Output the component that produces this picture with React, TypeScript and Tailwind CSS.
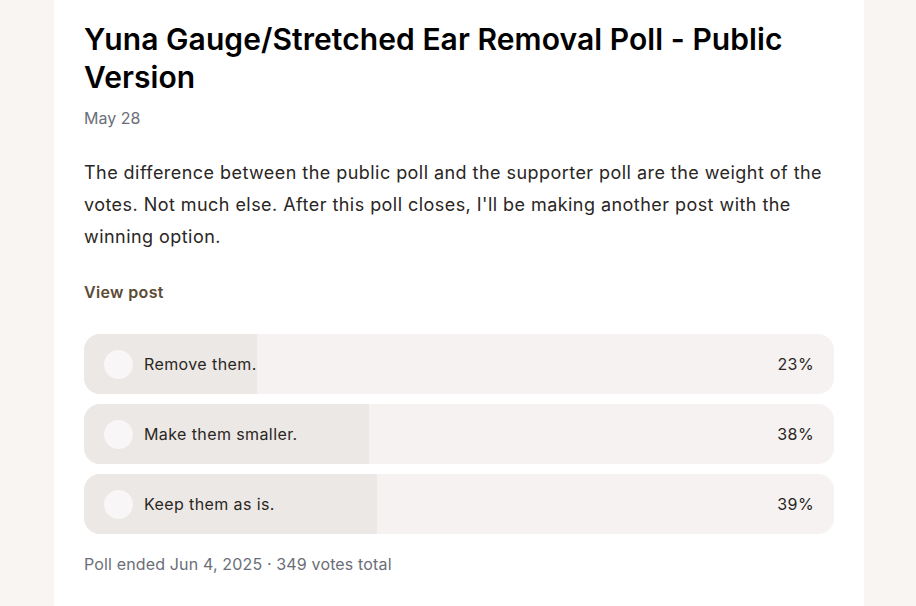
const options = [
  { label: 'Remove them.', pct: 23 },
  { label: 'Make them smaller.', pct: 38 },
  { label: 'Keep them as is.', pct: 39 },
];

export default function App() {
  return (
    <div className="min-h-screen w-full bg-[#f8f5f3] flex" style={{ fontFamily: 'Inter, "Noto Sans", sans-serif' }}>
      <div className="w-[54px] shrink-0" />
      <div className="w-[810px] shrink-0 bg-white px-[30px] pt-[20px] pb-[24px]">
        <h1 className="text-[30px] leading-[38px] font-semibold tracking-[0.07px] text-black">
          Yuna Gauge/Stretched Ear Removal Poll - Public Version
        </h1>
        <div className="mt-[10px] text-[16px] leading-6 text-[#6b6e78]">May 28</div>

        <p className="mt-[27px] text-[18px] leading-[32px] tracking-[0.45px] text-[#2a2623]">
          The difference between the public poll and the supporter poll are the weight of the votes. Not much else. After
          this poll closes, I'll be making another post with the winning option.
        </p>

        <div className="mt-[27px] text-[16px] leading-6 font-semibold tracking-[0.35px] text-[#5c4b34]">View post</div>

        <div className="mt-[30px] flex flex-col gap-[10px] w-[750px]">
          {options.map((o) => (
            <div key={o.label} className="relative h-[60px] rounded-[16px] bg-[#f5f2f1] overflow-hidden">
              <div className="absolute inset-y-0 left-0 bg-[#ece8e5]" style={{ width: `${o.pct}%` }} />
              <div className="relative h-full flex items-center pl-[20px] pr-[20px]">
                <div className="w-[29px] h-[29px] rounded-full bg-[#f8f6f6]" />
                <span className="ml-[11px] text-[16px] tracking-[0.4px] text-[#2a2623]">{o.label}</span>
                <span className="ml-auto text-[16px] tracking-[0.4px] text-[#2a2623]">{o.pct}%</span>
              </div>
            </div>
          ))}
        </div>

        <div className="mt-[18px] text-[16px] leading-6 tracking-[0.15px] text-[#6b6e78]">
          Poll ended Jun 4, 2025 · 349 votes total
        </div>
      </div>
    </div>
  );
}
